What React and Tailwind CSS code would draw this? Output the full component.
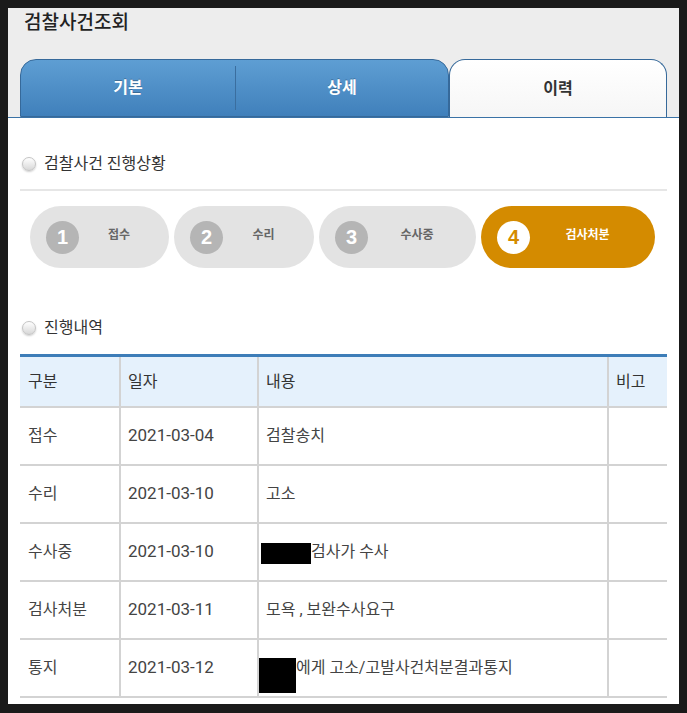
import React from "react";

function Radio() {
  return (
    <span className="inline-block ml-[2px] w-[14px] h-[14px] rounded-full border border-[#c4c4c4] bg-[linear-gradient(to_bottom,#ffffff,#d8d8d8)] shadow-[0_1px_2px_rgba(0,0,0,0.2)]" />
  );
}

const steps = [
  { n: "1", label: "접수", w: "w-[139px]" },
  { n: "2", label: "수리", w: "w-[140px]" },
  { n: "3", label: "수사중", w: "w-[157px]" },
  { n: "4", label: "검사처분", w: "w-[174px]", active: true },
];

function Step({ n, label, w, active }) {
  return (
    <div
      className={`${w} h-[62px] rounded-full flex items-center pl-4 ${
        active ? "bg-[#d48b00]" : "bg-[#e3e3e3]"
      }`}
    >
      <div
        className={`w-[33px] h-[33px] rounded-full flex items-center justify-center text-[20px] font-bold font-['Liberation_Sans',Arial,sans-serif] ${
          active ? "bg-white text-[#d48b00]" : "bg-[#b5b5b5] text-white"
        }`}
      >
        {n}
      </div>
      <div
        className={`flex-1 text-center pr-[10px] mb-[5px] text-[12px] font-bold ${
          active ? "text-white" : "text-[#666]"
        }`}
      >
        {label}
      </div>
    </div>
  );
}

const rows = [
  { a: "접수", d: "2021-03-04", c: "검찰송치" },
  { a: "수리", d: "2021-03-10", c: "고소" },
  { a: "수사중", d: "2021-03-10", c: "검사가 수사", box: "b1" },
  { a: "검사처분", d: "2021-03-11", c: "모욕 , 보완수사요구" },
  { a: "통지", d: "2021-03-12", c: "에게 고소/고발사건처분결과통지", box: "b2" },
];

export default function App() {
  return (
    <div className="bg-[#1a1a1a] w-[687px] h-[713px] pt-2 pl-2 font-['Roboto','Noto_Sans_CJK_KR',sans-serif]">
      <div className="w-[671px] h-[696px] bg-white flex flex-col overflow-hidden">
        <header className="bg-[#ededed] border-b border-[#3a72a6] h-[110px] flex flex-col shrink-0">
          <h1 className="pl-4 text-[19px] leading-[26px] text-[#222] font-medium font-['Noto_Sans_CJK_KR',sans-serif]">
            검찰사건조회
          </h1>
          <div className="mt-[25px] mx-3 flex h-[58px] -mb-px">
            <div className="w-[429px] h-[58px] flex rounded-t-[16px] border border-[#36699a] bg-[linear-gradient(to_bottom,#5e9ed3,#4080bb)]">
              <div className="w-[214px] flex items-center justify-center text-white text-[16px] font-bold [text-shadow:0_-1px_0_rgba(0,0,0,0.25)]">
                기본
              </div>
              <div className="w-px h-[44px] self-center bg-[#3a6e9f]" />
              <div className="flex-1 flex items-center justify-center text-white text-[16px] font-bold [text-shadow:0_-1px_0_rgba(0,0,0,0.25)]">
                상세
              </div>
            </div>
            <div className="w-[218px] h-[58px] rounded-t-[16px] border border-b-0 border-[#36699a] bg-[linear-gradient(to_bottom,#ffffff,#f6f6f6)] flex items-center justify-center text-[#333] text-[16px] font-bold">
              이력
            </div>
          </div>
        </header>

        <main className="px-3 flex-1">
          <div className="mt-[34px] h-6 flex items-center">
            <Radio />
            <span className="ml-2 text-[16px] text-[#333]">검찰사건 진행상황</span>
          </div>
          <div className="mt-[13px] h-[2px] bg-[#e6e6e6]" />

          <div className="mt-[15px] pl-[10px] flex gap-[5px]">
            {steps.map((s) => (
              <Step key={s.n} {...s} />
            ))}
          </div>

          <div className="mt-[48px] h-6 flex items-center">
            <Radio />
            <span className="ml-2 text-[16px] text-[#333]">진행내역</span>
          </div>

          <div className="mt-[14px] border-t-[3px] border-[#3d7db8] text-[16px]">
            <div className="flex h-[51px] bg-[#e5f1fc] border-b-2 border-[#d3d3d3] text-[#333]">
              <div className="w-[99px] pl-2 flex items-center">구분</div>
              <div className="w-[138px] border-l-2 border-[#d3d3d3] pl-[7px] flex items-center">일자</div>
              <div className="w-[350px] border-l-2 border-[#d3d3d3] pl-[7px] flex items-center">내용</div>
              <div className="w-[60px] border-l-2 border-[#d3d3d3] pl-[7px] flex items-center">비고</div>
            </div>
            {rows.map((r, i) => (
              <div key={i} className="flex h-[58px] border-b-2 border-[#d3d3d3] text-[#444]">
                <div className="w-[99px] pl-2 flex items-center">{r.a}</div>
                <div className="w-[138px] border-l-2 border-[#d3d3d3] pl-[7px] flex items-center text-[17px]">{r.d}</div>
                <div
                  className={`w-[350px] border-l-2 border-[#d3d3d3] flex items-center ${
                    r.box ? "" : "pl-[7px]"
                  }`}
                >
                  {r.box === "b1" && <span className="ml-[2px] mt-[2px] w-[50px] h-[21px] bg-black shrink-0" />}
                  {r.box === "b2" && <span className="mt-[14px] w-[37px] h-[35px] bg-black shrink-0" />}
                  <span>{r.c}</span>
                </div>
                <div className="w-[60px] border-l-2 border-[#d3d3d3]" />
              </div>
            ))}
          </div>
        </main>
      </div>
    </div>
  );
}
